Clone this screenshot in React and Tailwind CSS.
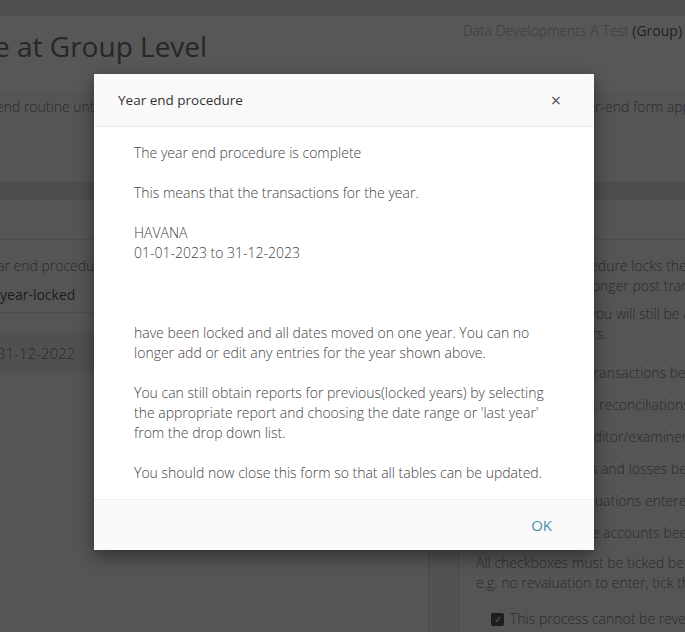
import React from 'react'

const checks = [
  'Have all the transactions been entered?',
  'Have all bank reconciliations been done?',
  'Have all the auditor/examiner adjustments been entered?',
  'Have all gains and losses been entered?',
  'Have all revaluations entered?',
  'Have all these accounts been approved?',
]

const App = () => {
  return (
    <div className="relative h-[632px] w-[685px] overflow-hidden bg-[#ebebeb] font-['Open_Sans',sans-serif] text-[14px] font-light text-[#7b7b7b]">
      {/* page underneath */}
      <div className="h-4 bg-[#e2e2e2]" />
      <div className="flex h-[76px] justify-between bg-[#f9f9f9]">
        <h1 className="ml-[-6px] mt-[12px] whitespace-nowrap text-[28px] font-normal leading-[36px] text-[#6e6e6e]">
          e at Group Level
        </h1>
        <div className="mr-[-4px] mt-[4px] whitespace-nowrap text-[#adadad]">
          Data Developments A Test <span className="font-normal text-[#5e5e5e]">(Group)</span> .
        </div>
      </div>
      <div className="flex h-[90px] justify-between whitespace-nowrap bg-[#f3f3f3] pt-[4px]">
        <span className="ml-[-4px]">end routine until the accounts are approved</span>
        <span className="mr-[-33px]">year-end form appears</span>
      </div>
      <div className="h-[18px] bg-[#dcdcdc]" />

      <div className="flex">
        <div className="h-[432px] w-[428px] shrink-0 bg-[#f3f3f3]">
          <div className="h-10 border-b border-[#d9d9d9]" />
          <div className="ml-[-3px] mt-[16px] whitespace-nowrap leading-[20px]">ar end procedure</div>
          <div className="mt-[9px] whitespace-nowrap border-b border-[#dddddd] pb-[7px] font-normal leading-[20px] text-[#575757]">
            year-locked
          </div>
          <div className="mt-[20px] flex h-[40px] items-center bg-[#e5e5e5] text-[15px]">
            <span className="ml-[-3px]">31-12-2022</span>
          </div>
        </div>
        <div className="w-[30px] shrink-0 border-l border-[#d0d0d0] bg-[#ebebeb]" />
        <div className="h-[432px] min-w-0 flex-1 overflow-hidden border-l border-[#d0d0d0] bg-[#f3f3f3]">
          <div className="h-10 border-b border-[#d9d9d9]" />
          <div className="w-[400px] pl-[17px] pt-[16px] leading-[20px]">
            <p className="whitespace-nowrap">The year end procedure locks the year in</p>
            <p className="whitespace-nowrap">which you can no longer post transactions.</p>
            <p className="mt-[8px] whitespace-nowrap">After this process you will still be able to</p>
            <p className="whitespace-nowrap">report on past years.</p>
            <div className="mt-[13px] flex flex-col">
              {checks.map((c) => (
                <div key={c} className="flex h-8 items-center whitespace-nowrap pl-[15px]">
                  <span className="mr-2 inline-block size-[13px] border border-[#bbbbbb] bg-white" />
                  {c}
                </div>
              ))}
            </div>
            <p className="mt-[4px] whitespace-nowrap">All checkboxes must be ticked before you continue,</p>
            <p className="whitespace-nowrap">e.g. no revaluation to enter, tick the box.</p>
            <div className="mt-[16px] flex items-center whitespace-nowrap pl-[15px]">
              <span className="mr-[6px] flex size-[13px] items-center justify-center rounded-[2px] bg-[#555555] text-[10px] leading-none text-white">
                ✓
              </span>
              This process cannot be reversed
            </div>
          </div>
        </div>
      </div>

      {/* overlay */}
      <div className="absolute inset-0 bg-black/65" />

      {/* modal */}
      <div className="absolute left-[94px] top-[74px] w-[500px] rounded-[2px] bg-white shadow-[0_6px_18px_rgba(0,0,0,0.45)]">
        <div className="flex h-[53px] items-center justify-between border-b border-[#e8e8e8] bg-[#f9f9f9] px-6">
          <span className="text-[13.5px] font-normal text-[#333333]">Year end procedure</span>
          <span className="mr-[9px] text-[18px] font-normal leading-none text-[#555555]">×</span>
        </div>
        <div className="px-10 pb-[16px] pt-[16px] text-[14px] leading-[20px] text-[#444444]">
          <p className="mb-5">The year end procedure is complete</p>
          <p className="mb-5">This means that the transactions for the year.</p>
          <p className="mb-[60px]">
            HAVANA
            <br />
            01-01-2023 to 31-12-2023
          </p>
          <p className="mb-5">
            have been locked and all dates moved on one year. You can no longer add or edit any entries for the year
            shown above.
          </p>
          <p className="mb-5">
            You can still obtain reports for previous(locked years) by selecting the appropriate report and choosing the
            date range or 'last year' from the drop down list.
          </p>
          <p>You should now close this form so that all tables can be updated.</p>
        </div>
        <div className="flex h-[51px] items-center justify-end border-t border-[#eeeeee] bg-[#fafafa] pr-[42px]">
          <button className="text-[15px] font-normal text-[#4e90a8]">OK</button>
        </div>
      </div>
    </div>
  )
}

export default App
